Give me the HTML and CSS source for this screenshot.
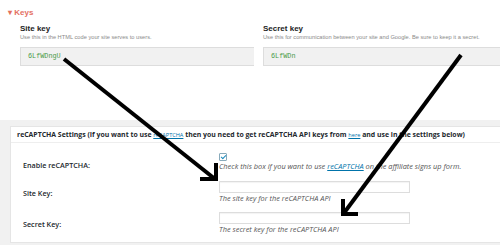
FILE: index.html
```html
<!DOCTYPE html>
<html lang="en">
<head>
    <meta charset="UTF-8">
    <title>reCAPTCHA keys</title>
    <link rel="stylesheet" href="styles.css">
</head>
<body>
    <div class="keys">
        <div class="keys-title">&#9662; Keys</div>
        <div class="key-cols">
            <div class="key-col">
                <div class="key-name">Site key</div>
                <div class="key-desc">Use this in the HTML code your site serves to users.</div>
                <div class="key-box">6LfWDngU</div>
            </div>
            <div class="key-col">
                <div class="key-name">Secret key</div>
                <div class="key-desc">Use this for communication between your site and Google. Be sure to keep it a secret.</div>
                <div class="key-box">6LfWDn</div>
            </div>
        </div>
    </div>

    <div class="admin">
        <div class="card">
            <div class="card-head">reCAPTCHA Settings (If you want to use <a href="#">reCAPTCHA</a> then you need to get reCAPTCHA API keys from <a href="#">here</a> and use in the settings below)</div>
            <div class="card-body">
                <div class="row row-first">
                    <div class="label">Enable reCAPTCHA:</div>
                    <div class="field">
                        <span class="check"></span>
                        <div class="hint">Check this box if you want to use <a href="#">reCAPTCHA</a> on the affiliate signs up form.</div>
                    </div>
                </div>
                <div class="row">
                    <div class="label">Site Key:</div>
                    <div class="field">
                        <span class="input"></span>
                        <div class="hint">The site key for the reCAPTCHA API</div>
                    </div>
                </div>
                <div class="row">
                    <div class="label">Secret Key:</div>
                    <div class="field">
                        <span class="input"></span>
                        <div class="hint">The secret key for the reCAPTCHA API</div>
                    </div>
                </div>
            </div>
        </div>
    </div>

    <!-- arrows drawn over the screenshot -->
    <svg class="arrows" width="500" height="245" viewBox="0 0 500 245">
        <g stroke="#000" stroke-width="4" fill="none" stroke-linecap="butt">
            <line x1="64" y1="59" x2="215" y2="179"/>
            <polyline points="200,179 216,179 216,163"/>
            <line x1="461" y1="55" x2="344" y2="213"/>
            <polyline points="343,199 343,214 358,214"/>
        </g>
    </svg>
</body>
</html>
```

FILE: styles.css
```css
*{padding:0;margin:0;box-sizing:border-box;}
body{width:500px;height:245px;overflow:hidden;position:relative;background:#fff;font-family:Arial,"Liberation Sans",sans-serif;}

.keys{height:120px;padding:8px 0 0 8px;}
.keys-title{color:#e4705f;font-size:8px;font-weight:bold;height:15px;}
.key-cols{display:flex;gap:9px;padding-left:12px;}
.key-col{width:234px;}
.key-col+.key-col{flex:1;}
.key-name{font-size:8px;font-weight:bold;color:#222;line-height:9px;margin-top:1px;}
.key-desc{font-size:5.7px;color:#8a8a8a;line-height:8px;}
.key-box{margin-top:6px;height:19px;background:#f1f1f1;border:1px solid #ddd;border-right:none;color:#4a9a4a;font-family:"Liberation Mono",monospace;font-size:6.8px;line-height:17px;padding-left:7px;}

.admin{height:125px;background:#f1f1f1;padding:6px 0 2px 10px;}
.card{height:117px;background:#fff;border:1px solid #e5e5e5;border-right:none;font-family:"Open Sans",sans-serif;color:#23282d;}
.card-head{height:16px;border-bottom:1px solid #eee;font-size:6.9px;font-weight:bold;line-height:16px;padding-left:6px;white-space:nowrap;}
.card-head a,.hint a{color:#0073aa;}
.card-head a{font-weight:normal;font-size:5.6px;}
.card-body{padding:10px 0 0 12px;}
.row{display:flex;height:31px;}
.row-first{height:28px;}
.label{width:196px;font-size:7.2px;font-weight:600;padding-top:7px;}
.field{flex:1;}
.check{display:block;width:8px;height:8px;border:1px solid #8ab;border-radius:1px;position:relative;}
.check::after{content:"";position:absolute;left:2px;top:0px;width:2px;height:4px;border:solid #1e8cbe;border-width:0 1.5px 1.5px 0;transform:rotate(45deg);}
.input{display:block;width:191px;height:12px;border:1px solid #ddd;box-shadow:inset 0 1px 1px rgba(0,0,0,.05);}
.hint{font-size:7.4px;font-style:italic;color:#555;line-height:9px;margin-top:1px;white-space:nowrap;}

.arrows{position:absolute;left:0;top:0;}
```
